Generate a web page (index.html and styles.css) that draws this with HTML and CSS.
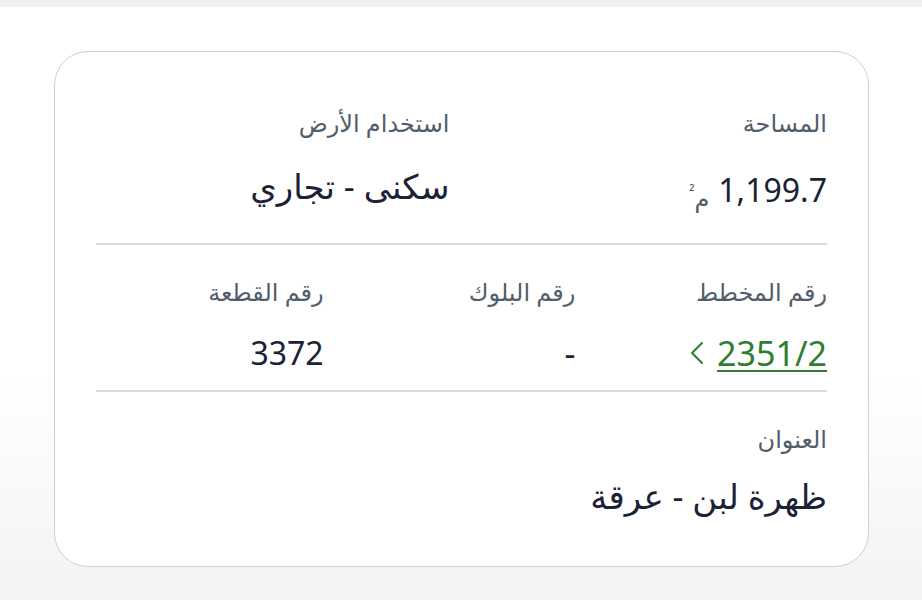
FILE: index.html
```html
<!DOCTYPE html>
<html lang="ar" dir="rtl">
<head>
<meta charset="utf-8">
<link rel="stylesheet" href="styles.css">
</head>
<body>
<div class="topbar"></div>
<main class="page">
  <section class="card">
    <div class="row row-1">
      <div class="field">
        <div class="label">المساحة</div>
        <div class="value"><span class="num" dir="ltr">1,199.7</span><span class="unit">م<sup>²</sup></span></div>
      </div>
      <div class="field">
        <div class="label">استخدام الأرض</div>
        <div class="value">سكنى - تجاري</div>
      </div>
    </div>
    <hr class="divider">
    <div class="row row-2">
      <div class="field">
        <div class="label">رقم المخطط</div>
        <div class="value link-value"><a class="link" href="#">2351/2</a><svg class="chev" width="14" height="24" viewBox="0 0 14 24"><polyline points="12,2 2,12 12,22" fill="none" stroke="#2e7d32" stroke-width="2" stroke-linecap="round" stroke-linejoin="round"/></svg></div>
      </div>
      <div class="field">
        <div class="label">رقم البلوك</div>
        <div class="value">-</div>
      </div>
      <div class="field">
        <div class="label">رقم القطعة</div>
        <div class="value num">3372</div>
      </div>
    </div>
    <hr class="divider">
    <div class="row row-3">
      <div class="field">
        <div class="label">العنوان</div>
        <div class="value">ظهرة لبن - عرقة</div>
      </div>
    </div>
  </section>
</main>
</body>
</html>
```

FILE: styles.css
```css
html, body {
  margin: 0;
  padding: 0;
}
body {
  width: 922px;
  height: 600px;
  overflow: hidden;
  font-family: "Noto Sans", "DejaVu Sans", sans-serif;
  background: linear-gradient(to bottom, #ffffff 0px, #ffffff 380px, #f3f3f3 600px);
}
.topbar {
  height: 7px;
  background: #f0f0f0;
}
.page {
  padding: 44px 53px 0 54px;
}
.card {
  background: #ffffff;
  border: 1.5px solid #cfcfcf;
  border-radius: 34px;
  padding: 0 41px;
  height: 516px;
  box-sizing: border-box;
}
.row {
  display: grid;
  column-gap: 24px;
}
.row-1 {
  grid-template-columns: repeat(2, 1fr);
  padding: 57px 0 30px;
}
.row-2 {
  grid-template-columns: repeat(3, 1fr);
  padding: 33px 0 17px;
}
.row-3 {
  grid-template-columns: 1fr;
  padding: 33px 0 0;
}
.field {
  display: flex;
  flex-direction: column;
  align-items: flex-start;
}
.label {
  font-size: 24px;
  line-height: 28px;
  color: #525d6b;
}
.value {
  font-size: 34px;
  line-height: 40px;
  color: #1b2236;
  margin-top: 23px;
  display: flex;
  align-items: center;
  gap: 9px;
}
.row-1 .value {
  margin-top: 29px;
}
.row-2 .value {
  margin-top: 27px;
}
.num {
  font-size: 32px;
}
.unit {
  font-size: 24px;
  color: #525d6b;
  position: relative;
  top: 5px;
}
.unit sup {
  font-size: 15px;
  vertical-align: 10px;
}
.link {
  font-size: 34px;
  color: #2e7d32;
  text-decoration: underline;
  text-decoration-thickness: 2px;
  text-underline-offset: 4px;
}
.link-value {
  gap: 13px;
}
.divider {
  border: 0;
  height: 2px;
  background: #dadada;
  margin: 0;
}
```
